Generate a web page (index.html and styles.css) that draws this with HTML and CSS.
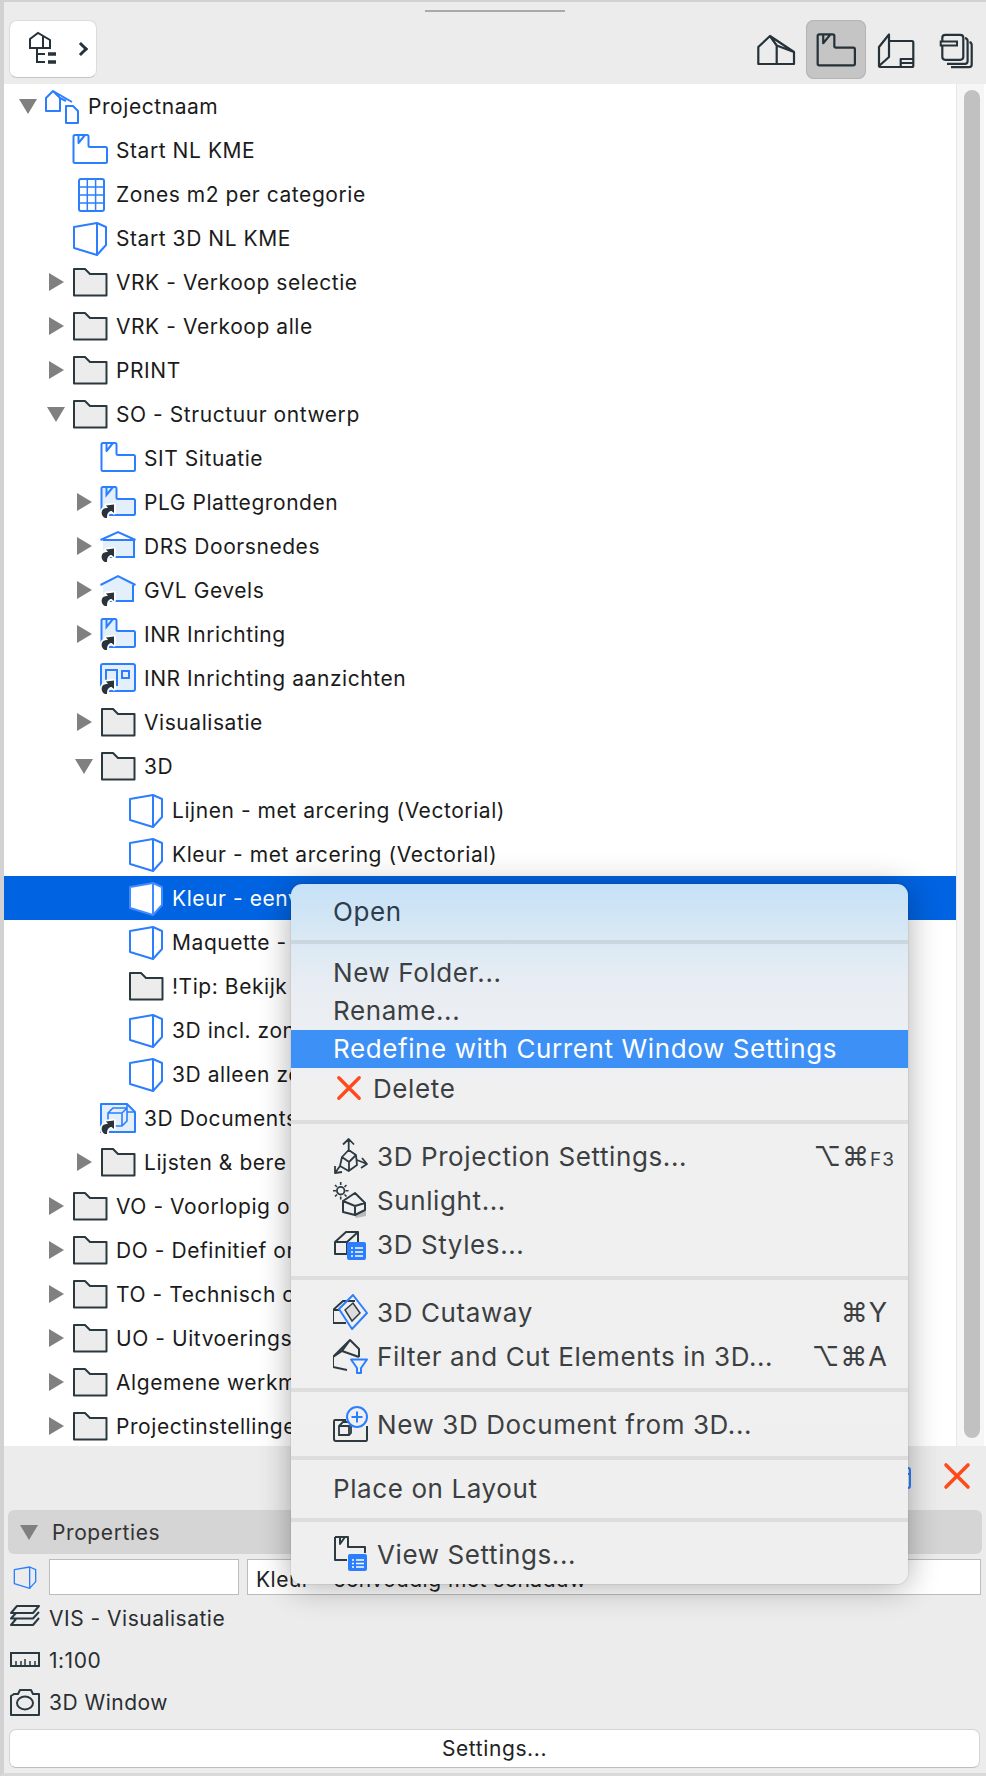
FILE: index.html
```html
<!DOCTYPE html>
<html lang="en">
<head>
    <meta charset="UTF-8">
    <meta name="viewport" content="width=device-width, initial-scale=1.0">
    <title>View Map</title>
    <link rel="stylesheet" href="styles.css">
</head>
<body>
    <svg class="sprite" xmlns="http://www.w3.org/2000/svg">
        <g id="alias"><path d="M5 34C2 33 1 29 2 27C3 24 6 24 8 24L6 21.500L14 20.500V29L11.500 27C9 27 7 29 7 34Z" fill="#fff" stroke="#fff" stroke-width="3.500" stroke-linejoin="round"/><path d="M5 34C2 33 1 29 2 27C3 24 6 24 8 24L6 21.500L14 20.500V29L11.500 27C9 27 7 29 7 34Z" fill="#2a3339"/></g>
        <symbol id="i-project" viewBox="0 0 36 36"><path d="M2 23V10L9 3L16 10V23ZM9 3L28 14M16 10L22 13" fill="none" stroke="currentColor" stroke-width="2" stroke-linejoin="round"/><path d="M22 18H29L34 23V35H22Z" fill="none" stroke="currentColor" stroke-width="2" stroke-linejoin="round"/></symbol>
        <symbol id="i-plan" viewBox="0 0 36 36"><path d="M3 3H15Q16.500 3 16.500 4.500V13.500Q16.500 15 18 15H33.500Q35 15 35 16.500V29.500Q35 31 33.500 31H3Q1.500 31 1.500 29.500V4.500Q1.500 3 3 3ZM6.500 3V11L13 3" fill="none" stroke="currentColor" stroke-width="2" stroke-linejoin="round"/></symbol>
        <symbol id="i-plan-link" viewBox="0 0 36 36"><path d="M3 3H15Q16.500 3 16.500 4.500V13.500Q16.500 15 18 15H33.500Q35 15 35 16.500V29.500Q35 31 33.500 31H3Q1.500 31 1.500 29.500V4.500Q1.500 3 3 3Z" fill="#e3f0fc" stroke="currentColor" stroke-width="2" stroke-linejoin="round"/><path d="M6.500 3V11L13 3" fill="none" stroke="currentColor" stroke-width="2"/><use href="#alias"/></symbol>
        <symbol id="i-table" viewBox="0 0 36 36"><rect x="7" y="3" width="25" height="32" rx="2" fill="none" stroke="currentColor" stroke-width="2"/><path d="M15.300 3V35M23.600 3V35M7 11H32M7 19H32M7 27H32" stroke="currentColor" stroke-width="1.500"/></symbol>
        <symbol id="i-3d" viewBox="0 0 36 36"><path d="M2 7L25 3L34 7V25L25 35L2 28ZM25 3V35" fill="none" stroke="currentColor" stroke-width="2" stroke-linejoin="round"/></symbol>
        <symbol id="i-3d-sel" viewBox="0 0 36 36"><path d="M2 7L25 3L34 7V25L25 35L2 28Z" fill="#fff" stroke="#3f8cff" stroke-width="2" stroke-linejoin="round"/><path d="M25 3V35" stroke="#3f8cff" stroke-width="2"/></symbol>
        <symbol id="i-folder" viewBox="0 0 36 36"><path d="M2 5H13L18 10H34.500V31.500H2Z" fill="#ececec" stroke="#2a3840" stroke-width="2" stroke-linejoin="round"/></symbol>
        <symbol id="i-section" viewBox="0 0 36 36"><path d="M3 12H34V29H3Z" fill="#e3f0fc"/><path d="M3 29H34V12M0.500 12L18 4L35.500 12M3 12H34" fill="none" stroke="currentColor" stroke-width="2"/><use href="#alias"/></symbol>
        <symbol id="i-elevation" viewBox="0 0 36 36"><path d="M3 13L18 4L33 13V29H3Z" fill="#e3f0fc"/><path d="M3 29H33V13M0.500 13L18 4L35.500 13" fill="none" stroke="currentColor" stroke-width="2"/><use href="#alias"/></symbol>
        <symbol id="i-interior" viewBox="0 0 36 36"><rect x="1" y="4" width="34" height="27" rx="2" fill="#e3f0fc" stroke="currentColor" stroke-width="2"/><path d="M6 27V10H17V26" fill="none" stroke="currentColor" stroke-width="2"/><rect x="22" y="11" width="7" height="7" fill="none" stroke="currentColor" stroke-width="2"/><use href="#alias"/></symbol>
        <symbol id="i-doc3d" viewBox="0 0 36 36"><path d="M1 4H27L35 12V32H1Z" fill="#e3f0fc" stroke="currentColor" stroke-width="2" stroke-linejoin="round"/><path d="M27 4V12H35M8 13L13 8H27V21L22 26H8ZM8 13H22V26M22 13L27 8M11 10V9" fill="none" stroke="currentColor" stroke-width="1.600"/><use href="#alias"/></symbol>
        <symbol id="i-map" viewBox="0 0 40 40"><path d="M3 19V10L11 4L23 11V19ZM16 7.500V19M10 19V33H18M10 25H18" fill="none" stroke="currentColor" stroke-width="2"/><path d="M21 25H29M21 33H29" stroke="currentColor" stroke-width="3.500"/></symbol>
        <symbol id="i-house" viewBox="0 0 40 40"><path d="M2.300 34V17L14 6L38 22V34ZM14 6L20.700 15.500L38 22M20.700 15.500V34" fill="none" stroke="currentColor" stroke-width="2.200" stroke-linejoin="round"/></symbol>
        <symbol id="i-layout" viewBox="0 0 40 40"><path d="M3 17L13 4.500V27L3 36ZM13 11H36Q37.300 11 37.300 12.500V35.500Q37.300 37 36 37H5Q3 37 3 36M24.700 37V29H37.300M24.700 33H37.300" fill="none" stroke="currentColor" stroke-width="2.200" stroke-linejoin="round"/></symbol>
        <symbol id="i-stack" viewBox="0 0 40 40"><rect x="6.300" y="4.800" width="21" height="25" rx="3" fill="none" stroke="currentColor" stroke-width="2.200"/><path d="M29 8C31 8.500 31.600 9.500 31.600 11V31C31.600 33 30.600 33.800 29 33.800H11M33.500 12C35 12.500 35.700 13.500 35.700 15V34.500C35.700 36.500 34.700 37.200 33 37.200H15" fill="none" stroke="currentColor" stroke-width="2.200"/><rect x="4.700" y="11.500" width="16.300" height="4" fill="#ececec" stroke="currentColor" stroke-width="2"/></symbol>
        <symbol id="i-x" viewBox="0 0 28 28"><path d="M3 3L25 25M25 3L3 25" stroke="#ff4a1c" stroke-width="3.600" stroke-linecap="round"/></symbol>
        <symbol id="i-list" viewBox="0 0 30 30"><rect x="2" y="8" width="26" height="20" rx="2" fill="none" stroke="#2b7fff" stroke-width="2"/><path d="M2 14H28M8 19H25M8 24H25" stroke="#2b7fff" stroke-width="2"/></symbol>
        <symbol id="i-projection" viewBox="0 0 36 36"><path d="M15.700 12V1M10 6.500L15.700 1L21 6.500M15.700 12L23 17L24 27L15.700 33L7 28L9 19ZM9 19L16 24L23 17M16 24V33M24 22L34 26M29 20L34 26L28 30M7 28L2 35M2 28L2 35L9 34" fill="none" stroke="#2d3a42" stroke-width="1.800" stroke-linejoin="round"/></symbol>
        <symbol id="i-sun" viewBox="0 0 36 36"><path d="M21 33L33 27V34L23 36Z" fill="#b9bcbe"/><circle cx="7.700" cy="8.700" r="3.800" fill="none" stroke="#2d3a42" stroke-width="1.800"/><path d="M7.700 0V3M7.700 14.500V17.500M0 8.700H3M12.500 8.700H15.500M2 3L4 5M11.500 12.500L13.500 14.500M13.500 3L11.500 5M2 14.500L4 12.500" stroke="#2d3a42" stroke-width="1.600"/><path d="M10 19L22 11L32 21V28L22 33L10 30ZM10 19L22 24L32 21M22 24V33" fill="none" stroke="#2d3a42" stroke-width="2" stroke-linejoin="round"/></symbol>
        <symbol id="i-styles" viewBox="0 0 36 36"><path d="M2 16L13 6H25V18M2 16H14V28H2ZM14 16L25 6" fill="none" stroke="#2d3a42" stroke-width="2" stroke-linejoin="round"/><rect x="14" y="16" width="19" height="18" rx="2" fill="#2b7fff"/><path d="M18 22H20M22 22H30M18 26H20M22 26H30M18 30H20M22 30H30" stroke="#fff" stroke-width="1.500"/></symbol>
        <symbol id="i-cutaway" viewBox="0 0 36 36"><path d="M0 16L10 7H22M0 16V29H13M0 16H6" fill="none" stroke="#2d3a42" stroke-width="2"/><path d="M20 1L34 19L19 35L6 15Z" fill="none" stroke="#2b7fff" stroke-width="2" stroke-linejoin="round"/><path d="M12 16L20 9L27 19L19 27Z" fill="#dcdcdc" stroke="#2d3a42" stroke-width="1.500"/></symbol>
        <symbol id="i-filter" viewBox="0 0 36 36"><path d="M0 19L17 2L26 11V19M0 19V29L14 32M0 19L9 13L17 2M9 13L26 19" fill="none" stroke="#2d3a42" stroke-width="2" stroke-linejoin="round"/><path d="M18 21.500H34L28 30V35H24V30Z" fill="#eef0f1" stroke="#2b7fff" stroke-width="2" stroke-linejoin="round"/></symbol>
        <symbol id="i-newdoc" viewBox="0 0 36 36"><path d="M13 14H2C1 14 1 15 1 16V33C1 34 2 35 3 35H33C34 35 34 34 34 33V20" fill="none" stroke="#2d3a42" stroke-width="2"/><path d="M6 20L10 16H18V27L16 29H6ZM6 20H16V29" fill="none" stroke="#2d3a42" stroke-width="1.800"/><circle cx="24" cy="11" r="10" fill="#eff0f1" stroke="#2b7fff" stroke-width="2"/><path d="M24 5.500V16.500M18.500 11H29.500" stroke="#2b7fff" stroke-width="2"/></symbol>
        <symbol id="i-viewset" viewBox="0 0 36 36"><path d="M2 1H15V11H32V17M2 1V24H14M7 1V8L12 1" fill="none" stroke="#2d3a42" stroke-width="2" stroke-linejoin="round"/><rect x="15" y="18" width="19" height="17" rx="2" fill="#2b7fff"/><path d="M19 24H21M23 24H31M19 27.500H21M23 27.500H31M19 31H21M23 31H31" stroke="#fff" stroke-width="1.500"/></symbol>
        <symbol id="i-layers" viewBox="0 0 30 30"><path d="M7 3H29L23 10H1ZM6 10L1 15.500H23L29 9M6 16L1 22H23L29 15" fill="none" stroke="#2a3840" stroke-width="2" stroke-linejoin="round"/></symbol>
        <symbol id="i-ruler" viewBox="0 0 30 30"><rect x="1" y="8" width="28" height="13" fill="none" stroke="#2a3840" stroke-width="2"/><path d="M6 16V20M11 16V20M15 14V20M20 16V20M25 16V20" stroke="#2a3840" stroke-width="1.500"/></symbol>
        <symbol id="i-camera" viewBox="0 0 30 30"><path d="M1 9L4 7H8L10 3H21L23 7H29V28H1Z" fill="none" stroke="#2a3840" stroke-width="2" stroke-linejoin="round"/><ellipse cx="15" cy="16" rx="8" ry="6.500" fill="none" stroke="#2a3840" stroke-width="2"/></symbol>
    </svg>

    <div class="app">
        <div class="toolbar">
            <div class="handle"></div>
            <button class="map-btn"><svg class="tb-icon"><use href="#i-map"/></svg><span class="chev"></span></button>
            <div class="tabs">
                <div class="tab"><svg class="tb-icon"><use href="#i-house"/></svg></div>
                <div class="tab active"><svg class="tb-icon"><use href="#i-plan"/></svg></div>
                <div class="tab"><svg class="tb-icon"><use href="#i-layout"/></svg></div>
                <div class="tab"><svg class="tb-icon"><use href="#i-stack"/></svg></div>
            </div>
        </div>

        <div class="tree-wrap">
            <div class="tree">
                <div class="row l0"><span class="tw down"></span><svg class="ic"><use href="#i-project"/></svg><span>Projectnaam</span></div>
                <div class="row l1"><span class="tw"></span><svg class="ic"><use href="#i-plan"/></svg><span>Start NL KME</span></div>
                <div class="row l1"><span class="tw"></span><svg class="ic"><use href="#i-table"/></svg><span>Zones m2 per categorie</span></div>
                <div class="row l1"><span class="tw"></span><svg class="ic"><use href="#i-3d"/></svg><span>Start 3D NL KME</span></div>
                <div class="row l1"><span class="tw right"></span><svg class="ic"><use href="#i-folder"/></svg><span>VRK - Verkoop selectie</span></div>
                <div class="row l1"><span class="tw right"></span><svg class="ic"><use href="#i-folder"/></svg><span>VRK - Verkoop alle</span></div>
                <div class="row l1"><span class="tw right"></span><svg class="ic"><use href="#i-folder"/></svg><span>PRINT</span></div>
                <div class="row l1"><span class="tw down"></span><svg class="ic"><use href="#i-folder"/></svg><span>SO - Structuur ontwerp</span></div>
                <div class="row l2"><span class="tw"></span><svg class="ic"><use href="#i-plan"/></svg><span>SIT Situatie</span></div>
                <div class="row l2"><span class="tw right"></span><svg class="ic"><use href="#i-plan-link"/></svg><span>PLG Plattegronden</span></div>
                <div class="row l2"><span class="tw right"></span><svg class="ic"><use href="#i-section"/></svg><span>DRS Doorsnedes</span></div>
                <div class="row l2"><span class="tw right"></span><svg class="ic"><use href="#i-elevation"/></svg><span>GVL Gevels</span></div>
                <div class="row l2"><span class="tw right"></span><svg class="ic"><use href="#i-plan-link"/></svg><span>INR Inrichting</span></div>
                <div class="row l2"><span class="tw"></span><svg class="ic"><use href="#i-interior"/></svg><span>INR Inrichting aanzichten</span></div>
                <div class="row l2"><span class="tw right"></span><svg class="ic"><use href="#i-folder"/></svg><span>Visualisatie</span></div>
                <div class="row l2"><span class="tw down"></span><svg class="ic"><use href="#i-folder"/></svg><span>3D</span></div>
                <div class="row l3"><span class="tw"></span><svg class="ic"><use href="#i-3d"/></svg><span>Lijnen - met arcering (Vectorial)</span></div>
                <div class="row l3"><span class="tw"></span><svg class="ic"><use href="#i-3d"/></svg><span>Kleur - met arcering (Vectorial)</span></div>
                <div class="row l3 selected"><span class="tw"></span><svg class="ic"><use href="#i-3d-sel"/></svg><span>Kleur - eenv</span></div>
                <div class="row l3"><span class="tw"></span><svg class="ic"><use href="#i-3d"/></svg><span>Maquette -</span></div>
                <div class="row l3"><span class="tw"></span><svg class="ic"><use href="#i-folder"/></svg><span>!Tip: Bekijk</span></div>
                <div class="row l3"><span class="tw"></span><svg class="ic"><use href="#i-3d"/></svg><span>3D incl. zon</span></div>
                <div class="row l3"><span class="tw"></span><svg class="ic"><use href="#i-3d"/></svg><span>3D alleen zo</span></div>
                <div class="row l2"><span class="tw"></span><svg class="ic"><use href="#i-doc3d"/></svg><span>3D Documents</span></div>
                <div class="row l2"><span class="tw right"></span><svg class="ic"><use href="#i-folder"/></svg><span>Lijsten &amp; bere</span></div>
                <div class="row l1"><span class="tw right"></span><svg class="ic"><use href="#i-folder"/></svg><span>VO - Voorlopig o</span></div>
                <div class="row l1"><span class="tw right"></span><svg class="ic"><use href="#i-folder"/></svg><span>DO - Definitief or</span></div>
                <div class="row l1"><span class="tw right"></span><svg class="ic"><use href="#i-folder"/></svg><span>TO - Technisch o</span></div>
                <div class="row l1"><span class="tw right"></span><svg class="ic"><use href="#i-folder"/></svg><span>UO - Uitvoerings</span></div>
                <div class="row l1"><span class="tw right"></span><svg class="ic"><use href="#i-folder"/></svg><span>Algemene werkm</span></div>
                <div class="row l1"><span class="tw right"></span><svg class="ic"><use href="#i-folder"/></svg><span>Projectinstellinge</span></div>
            </div>
            <div class="scrollbar"><div class="thumb"></div></div>
        </div>

        <div class="tree-actions">
            <svg class="small-list"><use href="#i-list"/></svg>
            <svg class="small-x"><use href="#i-x"/></svg>
        </div>

        <div class="props-head"><span class="tw down"></span><span>Properties</span></div>
        <div class="props-inputs">
            <svg class="prop-3d"><use href="#i-3d"/></svg>
            <div class="field id-field"></div>
            <div class="field name-field">Kleur - eenvoudig met schaduw</div>
        </div>
        <div class="prop-row"><svg class="prop-ic"><use href="#i-layers"/></svg><span>VIS - Visualisatie</span></div>
        <div class="prop-row"><svg class="prop-ic"><use href="#i-ruler"/></svg><span>1:100</span></div>
        <div class="prop-row"><svg class="prop-ic"><use href="#i-camera"/></svg><span>3D Window</span></div>
        <button class="settings-btn">Settings...</button>

        <div class="menu">
            <div class="group first"><div class="item short">Open</div></div>
            <div class="group">
                <div class="item">New Folder...</div>
                <div class="item">Rename...</div>
                <div class="item hover">Redefine with Current Window Settings</div>
                <div class="item delete"><svg class="del-x"><use href="#i-x"/></svg>Delete</div>
            </div>
            <div class="group">
                <div class="item tall"><svg class="m-ic"><use href="#i-projection"/></svg>3D Projection Settings...<span class="keys f3">⌥⌘<small>F3</small></span></div>
                <div class="item tall"><svg class="m-ic"><use href="#i-sun"/></svg>Sunlight...</div>
                <div class="item tall"><svg class="m-ic"><use href="#i-styles"/></svg>3D Styles...</div>
            </div>
            <div class="group">
                <div class="item tall"><svg class="m-ic"><use href="#i-cutaway"/></svg>3D Cutaway<span class="keys">⌘Y</span></div>
                <div class="item tall"><svg class="m-ic"><use href="#i-filter"/></svg>Filter and Cut Elements in 3D...<span class="keys">⌥⌘A</span></div>
            </div>
            <div class="group">
                <div class="item tall"><svg class="m-ic"><use href="#i-newdoc"/></svg>New 3D Document from 3D...</div>
            </div>
            <div class="group"><div class="item">Place on Layout</div></div>
            <div class="group last">
                <div class="item tall"><svg class="m-ic"><use href="#i-viewset"/></svg>View Settings...</div>
            </div>
        </div>
    </div>
</body>
</html>
```
FILE: styles.css
```css
* {
box-sizing: border-box;
}

body {
margin: 0;
padding: 0;
font-family: Inter, "Liberation Sans", sans-serif;
background: #ececec;
overflow: hidden;
}

.sprite {
display: none;
}

.app {
position: relative;
width: 986px;
height: 1776px;
background: #ececec;
border-top: 2px solid #d2d2d2;
border-left: 4px solid #d2d2d2;
border-bottom: 3px solid #d9d9d9;
overflow: hidden;
}

/* top bar */
.toolbar {
position: relative;
display: flex;
justify-content: space-between;
height: 82px;
padding: 18px 0 0 5px;
color: #25323a;
}

.handle {
position: absolute;
left: 421px;
top: 8px;
width: 140px;
height: 2px;
background: #a9a9a9;
}

.map-btn {
display: flex;
align-items: center;
width: 88px;
height: 58px;
padding: 0 0 0 17px;
background: #fff;
border: 1px solid #dcdcdc;
border-bottom-color: #c4c4c4;
border-radius: 8px;
color: #25323a;
}

.chev {
width: 10px;
height: 10px;
margin-left: 9px;
border-top: 3px solid #25323a;
border-right: 3px solid #25323a;
transform: rotate(45deg);
}

.tabs {
display: flex;
}

.tab {
display: flex;
align-items: center;
justify-content: center;
width: 60px;
height: 59px;
border-radius: 8px;
}

.tab.active {
background: #c5c5c6;
box-shadow: inset 0 0 0 1px #b4b4b4;
}

.tab.active .tb-icon {
margin-top: 3px;
}

.tb-icon {
flex: none;
width: 40px;
height: 40px;
}

/* tree */
.tree-wrap {
display: flex;
height: 1362px;
background: #fff;
}

.tree {
width: 952px;
}

.row {
display: flex;
align-items: center;
height: 44px;
font-size: 21px;
letter-spacing: 0.56px;
color: #1b1b1b;
white-space: nowrap;
}

.row.selected {
background: #0063e1;
color: #fff;
}

.l0 { padding-left: 14px; }
.l1 { padding-left: 42px; }
.l2 { padding-left: 70px; }
.l3 { padding-left: 98px; }

.tw {
flex: none;
display: block;
width: 20px;
height: 18px;
}

.tw.right {
width: 0;
height: 0;
margin: 0 2px 0 3px;
border-left: 15px solid #808080;
border-top: 9px solid transparent;
border-bottom: 9px solid transparent;
}

.tw.down {
width: 0;
height: 0;
margin: 0 1px;
border-top: 15px solid #808080;
border-left: 9px solid transparent;
border-right: 9px solid transparent;
}

.ic {
flex: none;
width: 36px;
height: 36px;
margin: 0 8px 0 6px;
color: #2b7fff;
}

.scrollbar {
flex: none;
width: 28px;
padding: 6px 4px 8px 7px;
background: #f6f6f6;
border-left: 1px solid #e8e8e8;
}

.thumb {
width: 16px;
height: 100%;
background: #c1c1c1;
border-radius: 8px;
}

/* bottom panel */
.tree-actions {
display: flex;
align-items: center;
justify-content: flex-end;
gap: 31px;
height: 64px;
padding: 0 15px 0 0;
}

.small-x {
width: 28px;
height: 28px;
margin-top: -4px;
}

.small-list {
width: 30px;
height: 30px;
margin-top: -6px;
}

.props-head {
display: flex;
align-items: center;
height: 44px;
margin: 0 4px;
padding-left: 11px;
background: #d5d5d5;
border-radius: 6px;
font-size: 21px;
letter-spacing: 0.6px;
color: #333;
}

.props-head span:last-child {
margin-left: 13px;
}

.props-inputs {
display: flex;
align-items: center;
height: 36px;
margin-top: 5px;
}

.prop-3d {
flex: none;
width: 24px;
height: 24px;
margin: 0 12px 0 9px;
color: #2b7fff;
}

.field {
flex: none;
height: 36px;
background: #fff;
border: 1px solid #bcbcbc;
font-size: 21px;
letter-spacing: 0.5px;
line-height: 39px;
color: #222;
white-space: nowrap;
}

.id-field {
width: 190px;
}

.name-field {
width: 734px;
margin-left: 8px;
padding-left: 8px;
}

.prop-row {
display: flex;
align-items: center;
height: 42px;
font-size: 21px;
letter-spacing: 0.5px;
color: #2a2e32;
}

.prop-row span {
margin-left: 9px;
}

.prop-ic {
flex: none;
width: 30px;
height: 30px;
margin-left: 6px;
}

.props-inputs + .prop-row {
margin-top: 2px;
}

.settings-btn {
display: block;
width: 971px;
height: 39px;
margin: 6px 0 0 5px;
background: #fff;
border: 1px solid #d4d4d4;
border-bottom-color: #bdbdbd;
border-radius: 7px;
font-family: Inter, "Liberation Sans", sans-serif;
font-size: 21px;
letter-spacing: 0.6px;
color: #222;
}

/* context menu over the tree */
.menu {
position: absolute;
left: 287px;
top: 882px;
width: 617px;
height: 700px;
border-radius: 11px;
background: linear-gradient(#c5e1f7 0, #d8e8f4 50px, #e8edf3 100px, #f0f0f1 200px, #efefef 100%);
box-shadow: 0 3px 32px rgba(0, 0, 0, 0.32), 0 0 1px rgba(0, 0, 0, 0.5);
font-size: 26px;
letter-spacing: 0.6px;
color: #3c3f42;
overflow: hidden;
}

.group {
padding: 10px 0;
border-bottom: 4px solid rgba(0, 0, 0, 0.075);
}

.group.first {
color: #2d3d4c;
}

.group.last {
border-bottom: none;
}

.item {
display: flex;
align-items: center;
height: 38px;
padding: 0 20px 2px 42px;
white-space: nowrap;
}

.item.short {
height: 36px;
}

.item.tall {
height: 44px;
padding-bottom: 0;
}

.item.delete {
height: 42px;
}

.item.hover {
background: #3d90f5;
color: #fff;
}

.del-x {
flex: none;
width: 26px;
height: 26px;
margin: 0 11px 0 3px;
}

.m-ic {
flex: none;
width: 36px;
height: 36px;
margin-right: 8px;
}

.keys {
margin-left: auto;
font-family: Inter, "DejaVu Sans", sans-serif;
font-size: 27px;
letter-spacing: 1px;
}

.keys.f3 {
margin-right: -7px;
}

.keys small {
font-size: 19px;
}
```
